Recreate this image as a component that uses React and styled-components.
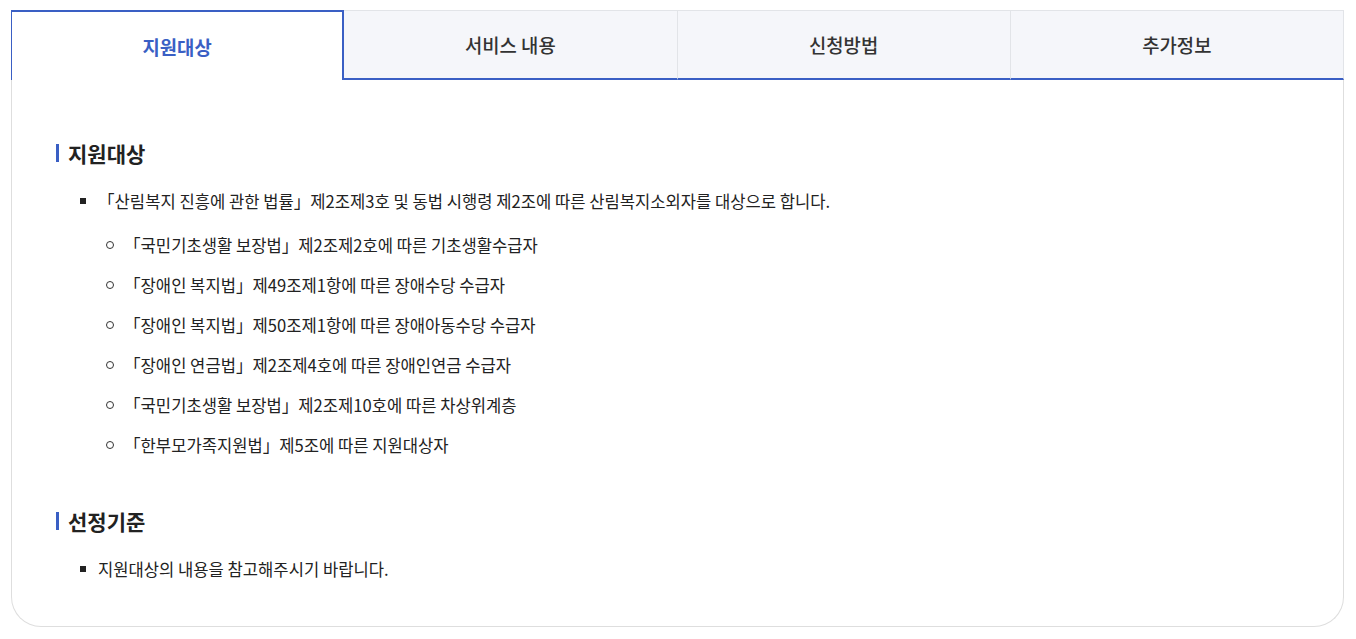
import React from "react";
import styled, { createGlobalStyle } from "styled-components";

const Global = createGlobalStyle`
  body {
    margin: 0;
    background: #fff;
    font-family: "Noto Sans CJK KR", "Noto Sans", sans-serif;
    color: #222;
  }
`;

const Page = styled.div`
  padding: 10px 12px 0 11px;
`;

const Box = styled.div`
  border: 1px solid #dedede;
  border-top: none;
  border-radius: 0 0 30px 30px;
  height: 617px;
  box-sizing: border-box;
`;

const Tabs = styled.div`
  display: grid;
  grid-template-columns: repeat(4, 1fr);
  margin: 0 -1px;
`;

const Tab = styled.div`
  height: 70px;
  box-sizing: border-box;
  display: flex;
  align-items: center;
  justify-content: center;
  font-size: 18.8px;
  font-weight: ${(p) => (p.$active ? 700 : 500)};
  color: ${(p) => (p.$active ? "#3a5fc4" : "#333")};
  background: ${(p) => (p.$active ? "#fff" : "#f5f6fa")};
  border-top: ${(p) => (p.$active ? "2px solid #3a5fc4" : "1px solid #e2e4e8")};
  border-left: ${(p) => (p.$active ? "1px solid #3a5fc4" : "none")};
  border-right: ${(p) => (p.$active ? "2px solid #3a5fc4" : "1px solid #e2e4e8")};
  border-bottom: ${(p) => (p.$active ? "none" : "2px solid #3a5fc4")};
  &:last-child {
    border-right: 1px solid #e2e4e8;
  }
`;

const Content = styled.div`
  padding: 58px 44px 0;
`;

const Heading = styled.h3`
  margin: ${(p) => (p.$first ? "0" : "49px 0 0")};
  display: flex;
  align-items: center;
  gap: 9px;
  font-size: 21px;
  line-height: 30px;
  font-weight: 700;
  color: #222;
  &::before {
    content: "";
    width: 3px;
    height: 18px;
    background: #3a5fc4;
  }
`;

const List = styled.ul`
  list-style: none;
  margin: 21px 0 0;
  padding: 0 0 0 42px;
`;

const Item = styled.li`
  position: relative;
  font-size: 16.6px;
  line-height: 24px;
  color: #222;
  &::before {
    content: "";
    position: absolute;
    left: -18px;
    top: 9px;
    width: 6px;
    height: 6px;
    background: #222;
  }
`;

const SubList = styled.ul`
  list-style: none;
  margin: 20px 0 0;
  padding: 0 0 0 26px;
`;

const SubItem = styled.li`
  position: relative;
  font-size: 16.6px;
  line-height: 24px;
  color: #222;
  & + & {
    margin-top: 16px;
  }
  &::before {
    content: "";
    position: absolute;
    left: -18px;
    top: 8px;
    width: 6px;
    height: 6px;
    border: 1px solid #333;
    border-radius: 50%;
  }
`;

const tabs = ["지원대상", "서비스 내용", "신청방법", "추가정보"];

const subs = [
  "「국민기초생활 보장법」제2조제2호에 따른 기초생활수급자",
  "「장애인 복지법」제49조제1항에 따른 장애수당 수급자",
  "「장애인 복지법」제50조제1항에 따른 장애아동수당 수급자",
  "「장애인 연금법」제2조제4호에 따른 장애인연금 수급자",
  "「국민기초생활 보장법」제2조제10호에 따른 차상위계층",
  "「한부모가족지원법」제5조에 따른 지원대상자",
];

export default function App() {
  return (
    <Page>
      <Global />
      <Box>
        <Tabs>
          {tabs.map((t, i) => (
            <Tab key={t} $active={i === 0}>
              {t}
            </Tab>
          ))}
        </Tabs>
        <Content>
          <Heading $first>지원대상</Heading>
          <List>
            <Item>
              「산림복지 진흥에 관한 법률」제2조제3호 및 동법 시행령 제2조에 따른 산림복지소외자를 대상으로 합니다.
              <SubList>
                {subs.map((s) => (
                  <SubItem key={s}>{s}</SubItem>
                ))}
              </SubList>
            </Item>
          </List>
          <Heading>선정기준</Heading>
          <List>
            <Item>지원대상의 내용을 참고해주시기 바랍니다.</Item>
          </List>
        </Content>
      </Box>
    </Page>
  );
}
